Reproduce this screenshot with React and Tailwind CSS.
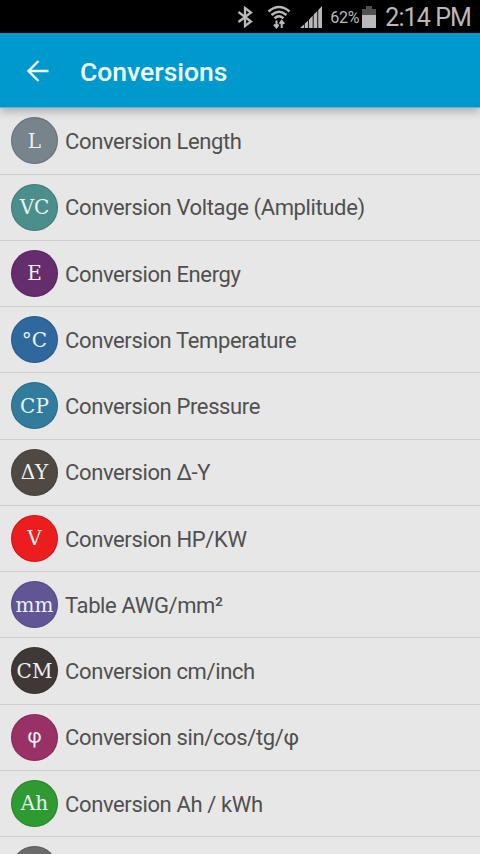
import React from "react";

const items = [
  { badge: "L", label: "Conversion Length", color: "bg-[#77848c]" },
  { badge: "VC", label: "Conversion Voltage (Amplitude)", color: "bg-[#4a8f8b]" },
  { badge: "E", label: "Conversion Energy", color: "bg-[#662d6c]" },
  { badge: "°C", label: "Conversion Temperature", color: "bg-[#2f689d]" },
  { badge: "CP", label: "Conversion Pressure", color: "bg-[#317c9d]" },
  { badge: "ΔY", label: "Conversion Δ-Y", color: "bg-[#4f4942]" },
  { badge: "V", label: "Conversion HP/KW", color: "bg-[#ec1d1e]" },
  { badge: "mm", label: "Table AWG/mm²", color: "bg-[#625596]" },
  { badge: "CM", label: "Conversion cm/inch", color: "bg-[#403836]" },
  { badge: "φ", label: "Conversion sin/cos/tg/φ", color: "bg-[#993167]", sans: true },
  { badge: "Ah", label: "Conversion Ah / kWh", color: "bg-[#2f9a31]" },
  { badge: "", label: "", color: "bg-[#6b6b6b]" },
];

function StatusBar() {
  return (
    <div className="flex h-[33px] shrink-0 items-center justify-end bg-black pr-[10px] text-[#b9b9b9]">
      {/* bluetooth */}
      <svg className="mr-[14px] h-[22px] w-[16px]" viewBox="0 0 16 22" fill="none" stroke="currentColor" strokeWidth="2.3">
        <path d="M1.5 6 L14 15.5 L8 20 V2 L14 6.5 L1.5 16" />
      </svg>
      {/* wifi with down/up arrows */}
      <svg className="mr-[9px] h-[24px] w-[24px]" viewBox="0 0 24 24" fill="none" stroke="currentColor" strokeWidth="2.4">
        <path d="M1.5 6.5 Q12 -2.5 22.5 6.5" />
        <path d="M4.5 10 Q12 3.4 19.5 10" />
        <path d="M7.5 13.3 Q12 9.3 16.5 13.3" />
        <path d="M9.5 15.5 V22.5 M7 19.5 L9.5 22.5 L11.6 19.5" strokeWidth="2" />
        <path d="M14.7 23 V16 M12.6 18.8 L14.7 15.8 L17.2 18.8" strokeWidth="2" />
      </svg>
      {/* signal */}
      <svg className="mr-[8px] h-[22px] w-[22px]" viewBox="0 0 22 22" fill="currentColor">
        <path d="M0 22 L4 18.5 V22Z" />
        <path d="M4.7 17.8 L8.1 14.5 V22 H4.7Z" />
        <path d="M9 13.4 L12.7 9.7 V22 H9Z" />
        <path d="M13.6 8.8 L17.3 5 V22 H13.6Z" />
        <path d="M18.2 4 L22 0 V22 H18.2Z" />
      </svg>
      <span className="mr-[3px] w-[29px] pt-[2px] text-[16px] leading-none tracking-[-0.3px] whitespace-nowrap">62%</span>
      {/* battery */}
      <svg className="mr-[9px] h-[22px] w-[14px]" viewBox="0 0 14 22">
        <path d="M4 0 H10 V3 H14 V9 H0 V3 H4Z" fill="#505050" />
        <path d="M0 9 H14 V22 H0Z" fill="currentColor" />
      </svg>
      <span className="-mr-[1px] pt-[2px] text-[25px] leading-none tracking-[-0.9px] whitespace-nowrap">2:14 PM</span>
    </div>
  );
}

function AppBar() {
  return (
    <header className="z-10 flex h-[75px] shrink-0 items-center border-b border-[#5bb5d6] bg-[#0099ce] pl-[27px] text-[#f0fbff] shadow-[0_3px_9px_rgba(0,0,0,0.28)]">
      <svg className="mt-[1px] h-[22px] w-[22px]" viewBox="0 0 22 22" fill="none" stroke="currentColor" strokeWidth="2.3">
        <path d="M21.5 11 H1.5 M11.5 1 L1.5 11 L11.5 21" />
      </svg>
      <h1 className="ml-[31px] pt-[3px] text-[26.5px] font-medium whitespace-nowrap">Conversions</h1>
    </header>
  );
}

function Row({ badge, label, color, sans }) {
  return (
    <li className="flex h-[66.25px] shrink-0 items-center border-b border-[#cfcfcf] pl-[11px]">
      <div
        className={`flex size-[47px] shrink-0 items-center justify-center rounded-full text-[20px] text-[#e9f3f4] inset-ring inset-ring-black/15 ${color} ${
          sans ? "pb-[2px] font-['Roboto',sans-serif]" : "font-['DejaVu_Serif',serif]"
        }`}
      >
        {badge}
      </div>
      <span className="ml-[7px] pt-[1.5px] text-[22px] tracking-[-0.37px] text-[#505050] whitespace-nowrap">{label}</span>
    </li>
  );
}

export default function App() {
  return (
    <div className="flex h-screen flex-col overflow-hidden bg-[#e7e7e7] font-['Roboto',sans-serif]">
      <StatusBar />
      <AppBar />
      <ul className="flex flex-col pt-[0.25px]">
        {items.map((item, i) => (
          <Row key={i} {...item} />
        ))}
      </ul>
    </div>
  );
}
